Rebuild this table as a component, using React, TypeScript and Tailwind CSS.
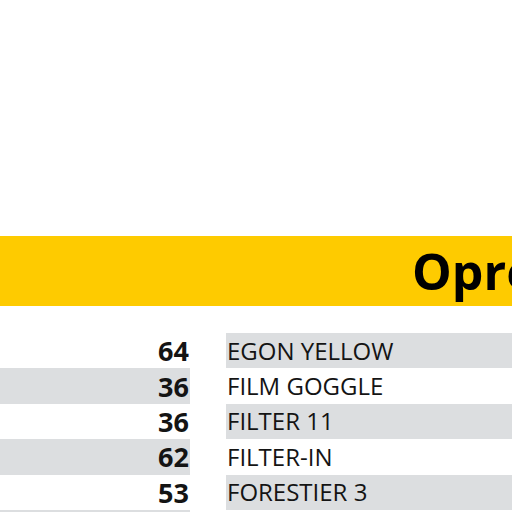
import React from "react";

const left = [
  { n: "64", g: false },
  { n: "36", g: true },
  { n: "36", g: false },
  { n: "62", g: true },
  { n: "53", g: false },
  { n: "", g: true },
];

const right = [
  { t: "EGON YELLOW", g: true },
  { t: "FILM GOGGLE", g: false },
  { t: "FILTER 11", g: true },
  { t: "FILTER-IN", g: false },
  { t: "FORESTIER 3", g: true },
  { t: "", g: false },
];

export default function App() {
  return (
    <div
      className="w-[512px] h-[512px] overflow-hidden bg-white text-[#141414]"
      style={{ fontFamily: '"Open Sans", sans-serif' }}
    >
      <div className="h-[236px]" />
      <div className="h-[70px] bg-[#fecb00] flex items-center pl-[412px] overflow-hidden">
        <span className="text-[50px] font-bold leading-none text-black whitespace-nowrap">Oprema</span>
      </div>
      <div className="h-[27px]" />
      <div className="flex gap-[36px]">
        <div className="w-[190px] flex flex-col shrink-0">
          {left.map((r, i) => (
            <div
              key={i}
              className={`h-[35.4px] flex items-center justify-end pr-[1px] text-[27px] font-bold leading-none ${r.g ? "bg-[#dcdee0]" : "bg-white"}`}
            >
              {r.n}
            </div>
          ))}
        </div>
        <div className="flex-1 flex flex-col min-w-[286px]">
          {right.map((r, i) => (
            <div
              key={i}
              className={`h-[35.4px] flex items-center pl-[1px] text-[24px] leading-none whitespace-nowrap ${r.g ? "bg-[#dcdee0]" : "bg-white"}`}
            >
              {r.t}
            </div>
          ))}
        </div>
      </div>
    </div>
  );
}
